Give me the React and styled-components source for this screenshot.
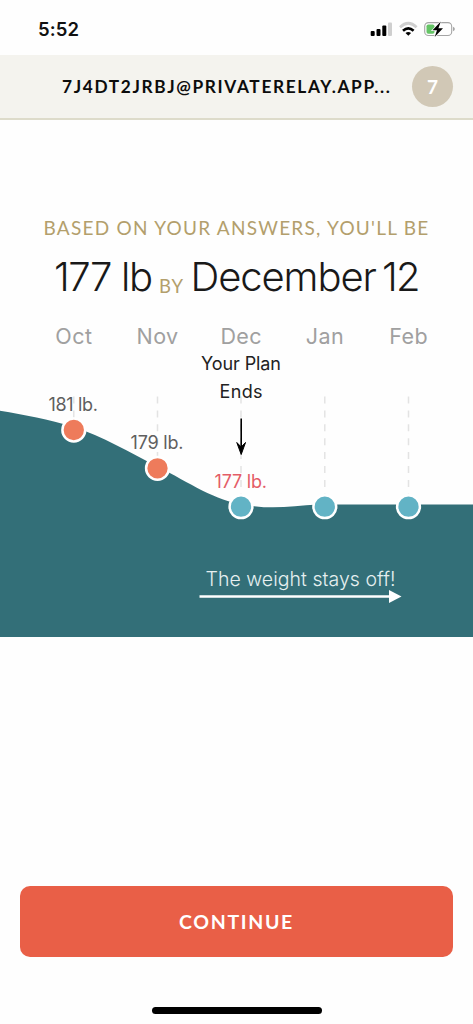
import React from 'react';
import styled, { createGlobalStyle } from 'styled-components';

const GlobalStyle = createGlobalStyle`
  * {
    box-sizing: border-box;
  }
  body {
    margin: 0;
    background-color: #fff;
    font-family: Inter, 'Liberation Sans', sans-serif;
  }
`;

const Screen = styled.div`
  display: flex;
  flex-direction: column;
  width: 473px;
  height: 1024px;
  overflow: hidden;
  background-color: #fefefe;
`;

const StatusBar = styled.div`
  display: flex;
  justify-content: space-between;
  height: 55px;
  padding: 18px 17px 0 38px;
`;
const Time = styled.span`
  font-size: 18.5px;
  line-height: 23px;
  font-weight: 600;
  letter-spacing: 0.1px;
  color: #111;
`;
const StatusIcons = styled.svg`
  width: 86px;
  height: 22px;
`;

const AccountBar = styled.header`
  display: flex;
  align-items: center;
  justify-content: flex-end;
  gap: 22px;
  height: 65px;
  padding-right: 20px;
  background-color: #f4f3ee;
  border-bottom: 2px solid #dddbca;
`;
const Email = styled.span`
  width: 329px;
  padding-left: 1px;
  font-family: Lato, sans-serif;
  font-size: 17.3px;
  line-height: 22px;
  font-weight: 700;
  letter-spacing: 1.64px;
  white-space: nowrap;
  color: #0c0c0c;
`;
const Badge = styled.span`
  display: flex;
  align-items: center;
  justify-content: center;
  width: 41px;
  height: 41px;
  border-radius: 50%;
  background-color: #d1c8b6;
  color: #fff;
  font-family: Lato, sans-serif;
  font-size: 19px;
  font-weight: 700;
`;

const Intro = styled.p`
  margin: 95px 0 0;
  padding-left: 43.5px;
  font-family: Lato, sans-serif;
  font-size: 19px;
  line-height: 26px;
  letter-spacing: 1.25px;
  white-space: nowrap;
  color: #b39f6c;
`;
const Headline = styled.h1`
  display: flex;
  align-items: baseline;
  height: 50px;
  margin: 10px 0 0;
  padding-left: 54px;
  font-size: 40px;
  line-height: 51px;
  font-weight: 350;
  white-space: nowrap;
  color: #191919;
`;
const Part = styled.span`
  width: ${({ $width }) => $width}px;
  letter-spacing: ${({ $spacing }) => $spacing}px;
`;
const By = styled.span`
  width: 31.5px;
  position: relative;
  top: 2px;
  font-family: Lato, sans-serif;
  font-size: 18.5px;
  font-weight: 400;
  letter-spacing: 1px;
  color: #b39f6c;
`;

const Months = styled.div`
  display: grid;
  grid-template-columns: repeat(5, 83.7px);
  height: 30px;
  margin-top: 20px;
  padding-left: 32px;
`;
const Month = styled.span`
  font-size: 21.5px;
  line-height: 31px;
  letter-spacing: 0.4px;
  text-align: center;
  color: #a0a0a0;
`;

const Chart = styled.svg`
  display: block;
  flex: none;
  width: 473px;
  height: 286px;
  font-family: Inter, 'Liberation Sans', sans-serif;
`;

const Footer = styled.footer`
  display: flex;
  flex-direction: column;
  align-items: center;
  margin-top: auto;
  padding: 0 20px 10px;
`;
const ContinueButton = styled.button`
  width: 100%;
  height: 71px;
  border: none;
  border-radius: 10px;
  background-color: #e95f47;
  color: #fff;
  font-family: Lato, sans-serif;
  font-size: 19.5px;
  font-weight: 700;
  letter-spacing: 1.65px;
`;
const HomeIndicator = styled.div`
  width: 170px;
  height: 7px;
  margin-top: 50px;
  border-radius: 4px;
  background-color: #000;
`;

const months = ['Oct', 'Nov', 'Dec', 'Jan', 'Feb'];

const points = [
  { x: 73.8, y: 430, color: '#ee7b5b' },
  { x: 157.5, y: 468.3, color: '#ee7b5b' },
  { x: 241, y: 506.7, color: '#62b3c5' },
  { x: 324.8, y: 506.7, color: '#62b3c5' },
  { x: 408.5, y: 506.7, color: '#62b3c5' },
];

const labels = [
  { text: '181 lb.', x: 48.5, y: 411, width: 49.5, color: '#5f5f5f' },
  { text: '179 lb.', x: 130.5, y: 449.3, width: 53, color: '#5f5f5f' },
  { text: '177 lb.', x: 214.5, y: 487.6, width: 52.5, color: '#e45d67' },
];

const WeightChart = () => (
  <Chart viewBox="0 351 473 286">
    {points.map(({ x, y }) => (
      <line
        key={x}
        x1={x}
        x2={x}
        y1="396.5"
        y2={y}
        stroke="#e3e3e3"
        strokeWidth="1.5"
        strokeDasharray="7 6.9"
      />
    ))}
    <path
      d="M0 410.7C25 415 48 419 73.8 427C102 436 130 452.5 157.5 466.5C190 483 215 501 245 504.7C272 510 292 506 318 504.5H473V637H0Z"
      fill="#336f78"
    />
    {points.map(({ x, y, color }) => (
      <circle
        key={x}
        cx={x}
        cy={y}
        r="11.4"
        fill={color}
        stroke="#fff"
        strokeWidth="2.5"
      />
    ))}
    {labels.map(({ text, x, y, width, color }) => (
      <text
        key={text}
        x={x}
        y={y}
        fontSize="18"
        textLength={width}
        fill={color}
      >
        {text}
      </text>
    ))}
    <g fontSize="18" fill="#222">
      <text x="201" y="369.7" textLength="80">
        Your Plan
      </text>
      <text x="219.5" y="397.5" textLength="43">
        Ends
      </text>
    </g>
    <path d="M241.2 418.5V450" stroke="#000" strokeWidth="1.6" />
    <path
      d="M236.8 442.5L241.2 454.5L245.5 442.5L241.2 447Z"
      fill="#000"
      stroke="#000"
      strokeWidth="1"
    />
    <text
      x="205.5"
      y="585.5"
      fontSize="19.5"
      fontWeight="300"
      textLength="190"
      fill="#e6eff0"
    >
      The weight stays off!
    </text>
    <path d="M199.5 596.5H390" stroke="#fff" strokeWidth="2.6" />
    <path d="M389 590L401.5 596.5L389 603Z" fill="#fff" />
  </Chart>
);

const DeviceStatus = () => (
  <StatusIcons viewBox="370 18 86 22">
    <rect x="370.7" y="31" width="4" height="5" rx="1" />
    <rect x="376.5" y="29" width="4" height="7" rx="1" />
    <rect x="382.3" y="25.5" width="4" height="10.5" rx="1" />
    <rect x="388" y="22.5" width="4" height="13.5" rx="1" fill="#cfcfcf" />
    <g fill="none" strokeWidth="2.7">
      <path d="M400 27.2Q408.3 19.3 416.6 27.2" stroke="#cfcfcf" />
      <path d="M403 30.7Q408.3 26 413.6 30.7" stroke="#000" />
    </g>
    <path d="M405.5 33Q408.3 30.8 411.1 33L408.3 35.8Z" />
    <rect
      x="424.7"
      y="22.6"
      width="27"
      height="12.9"
      rx="3.8"
      fill="none"
      stroke="#a5a5a5"
      strokeWidth="1.1"
    />
    <path d="M453 26.7Q454.9 27.5 454.9 29T453 31.3Z" fill="#a5a5a5" />
    <rect x="426.5" y="24.4" width="8" height="9.3" rx="1.8" fill="#65c466" />
    <path
      d="M440.8 21.5L432.5 30.2H437L434.7 37L443 28.2H438.4Z"
      stroke="#fff"
      strokeWidth="1.4"
      paintOrder="stroke"
    />
  </StatusIcons>
);

const App = () => {
  return (
    <>
      <GlobalStyle />
      <Screen>
        <StatusBar>
          <Time>5:52</Time>
          <DeviceStatus />
        </StatusBar>
        <AccountBar>
          <Email>7J4DT2JRBJ@PRIVATERELAY.APP...</Email>
          <Badge>7</Badge>
        </AccountBar>
        <Intro>BASED ON YOUR ANSWERS, YOU'LL BE</Intro>
        <Headline>
          <Part $width={105} $spacing={-1.4}>
            177 lb
          </Part>
          <By>BY</By>
          <Part $width={191.5} $spacing={-1.1}>
            December
          </Part>
          <Part $width={40} $spacing={-1.8}>
            12
          </Part>
        </Headline>
        <Months>
          {months.map((month) => (
            <Month key={month}>{month}</Month>
          ))}
        </Months>
        <WeightChart />
        <Footer>
          <ContinueButton>CONTINUE</ContinueButton>
          <HomeIndicator />
        </Footer>
      </Screen>
    </>
  );
};

export default App;
